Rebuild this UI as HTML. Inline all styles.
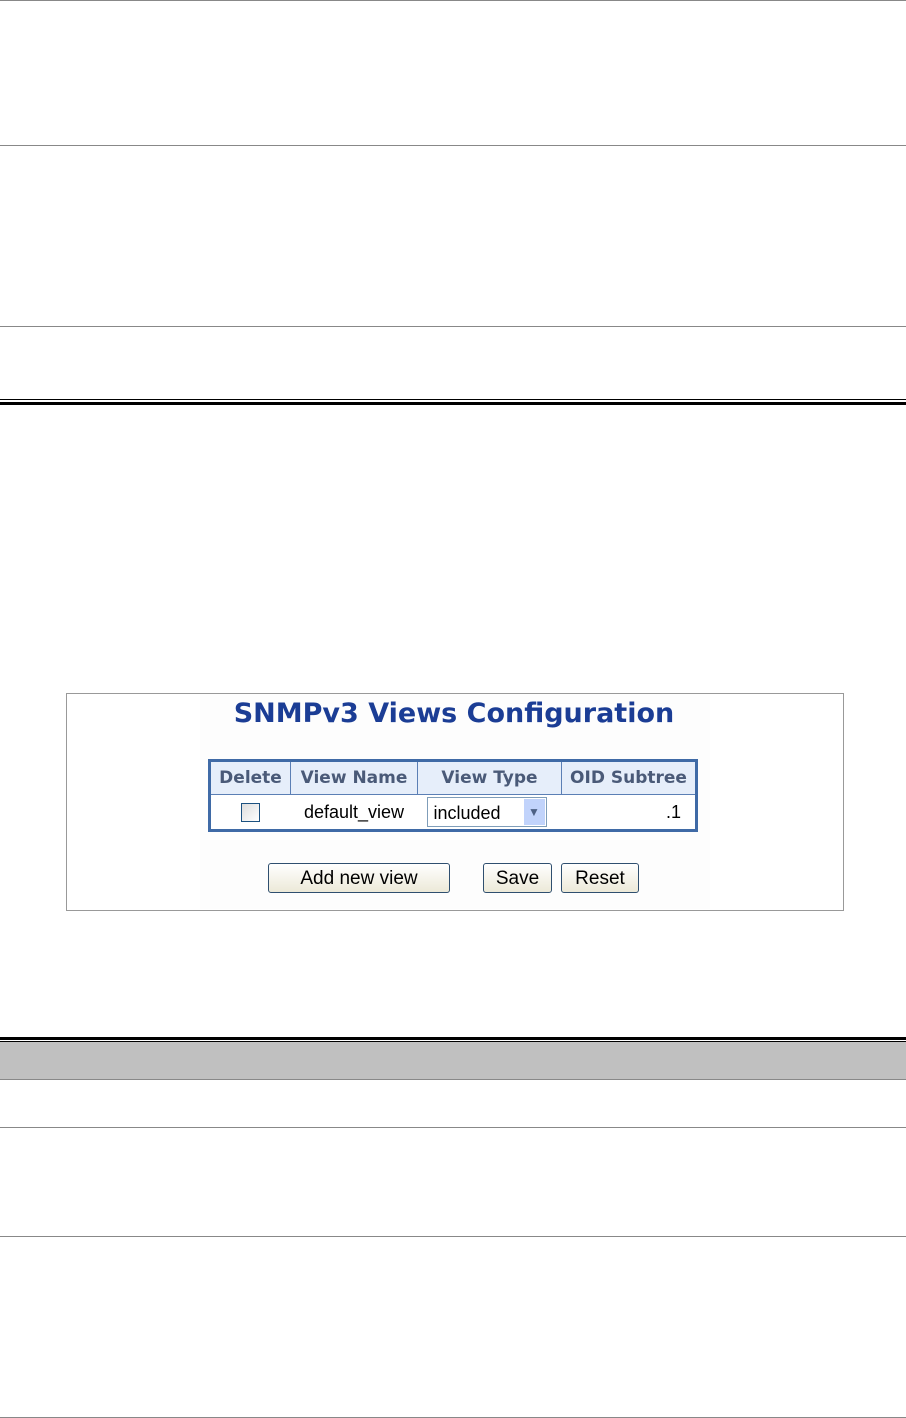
<!DOCTYPE html>
<html><head><style>
body{margin:0;width:906px;height:1418px;background:#fff;position:relative;font-family:"Liberation Sans",sans-serif;overflow:hidden}
.a{position:absolute;left:0;width:906px}
.g{background:#888;height:1px}
.b{background:#000}
.btn{position:absolute;border:1px solid #2f4f6f;border-radius:3px;background:linear-gradient(#fff,#ece9d8);font-size:19px;text-align:center;line-height:30px;height:30px;box-sizing:border-box;color:#000}
th{font-family:"DejaVu Sans",sans-serif;font-weight:bold;color:#4a5a78;font-size:17px;background:#e6eefa;border:1px solid #5b7fb5;height:32px;padding:0}
td{font-size:18px;height:34px;padding:0}
</style></head><body>
<div class="a g" style="top:0"></div>
<div class="a g" style="top:145px"></div>
<div class="a g" style="top:326px"></div>
<div class="a b" style="top:399px;height:1px"></div>
<div class="a b" style="top:402px;height:3px"></div>

<div style="position:absolute;left:66px;top:693px;width:776px;height:216px;border:1px solid #999"></div>
<div style="position:absolute;left:200px;top:694px;width:510px;height:215px;background:#fdfdfd"></div>
<div style="position:absolute;left:180px;top:698px;width:548px;text-align:center;font-family:'DejaVu Sans',sans-serif;font-weight:bold;font-size:27px;color:#1b3d95;white-space:nowrap">SNMPv3 Views Configuration</div>
<table style="position:absolute;left:208px;top:759px;width:490px;border-collapse:collapse;border:3px solid #3f6aa6;background:#fff">
<tr><th style="width:79px">Delete</th><th style="width:126px">View Name</th><th style="width:143px">View Type</th><th>OID Subtree</th></tr>
<tr><td style="text-align:center"><span style="display:inline-block;width:17px;height:17px;border:1px solid #1c5180;background:linear-gradient(135deg,#ddd,#fff);vertical-align:middle"></span></td>
<td style="text-align:center">default_view</td>
<td><div style="margin-left:9px;width:120px;height:30px;border:1px solid #7f9db9;position:relative;line-height:30px;padding-left:6px;box-sizing:border-box">included<span style="position:absolute;right:1px;top:1px;width:21px;height:26px;background:#c1d3fb;color:#4d6185;font-size:12px;text-align:center;line-height:26px">&#9660;</span></div></td>
<td style="text-align:right;padding-right:14px">.1</td></tr>
</table>
<div class="btn" style="left:268px;top:863px;width:182px">Add new view</div>
<div class="btn" style="left:483px;top:863px;width:69px">Save</div>
<div class="btn" style="left:561px;top:863px;width:78px">Reset</div>

<div class="a b" style="top:1037px;height:3px"></div>
<div class="a b" style="top:1041px;height:1px"></div>
<div class="a" style="top:1042px;height:37px;background:#c0c0c0"></div>
<div class="a g" style="top:1079px"></div>
<div class="a g" style="top:1127px"></div>
<div class="a g" style="top:1236px"></div>
<div class="a g" style="top:1417px"></div>
</body></html>
